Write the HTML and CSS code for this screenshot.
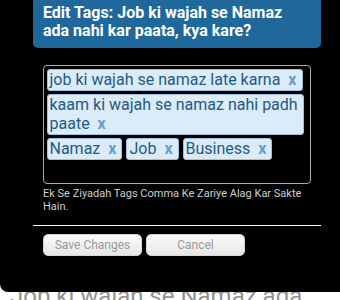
FILE: index.html
```html
<!DOCTYPE html>
<html>
<head>
<meta charset="utf-8">
<link rel="stylesheet" href="styles.css">
</head>
<body>
<div class="page">
  <h1 class="page-title">Job ki wajah se Namaz ada nahi kar paata, kya kare?</h1>
</div>
<div class="modal">
  <div class="modal-head">Edit Tags: Job ki wajah se Namaz ada nahi kar paata, kya kare?</div>
  <div class="tag-box">
    <span class="tag">job ki wajah se namaz late karna<span class="tag-x">x</span></span>
    <span class="tag">kaam ki wajah se namaz nahi padh paate<span class="tag-x">x</span></span>
    <span class="tag">Namaz<span class="tag-x">x</span></span>
    <span class="tag">Job<span class="tag-x">x</span></span>
    <span class="tag">Business<span class="tag-x">x</span></span>
  </div>
  <p class="hint">Ek Se Ziyadah Tags Comma Ke Zariye Alag Kar Sakte Hain.</p>
  <hr class="divider">
  <div class="actions">
    <button class="btn">Save Changes</button>
    <button class="btn">Cancel</button>
  </div>
</div>
</body>
</html>
```
FILE: styles.css
```css
html, body {
  margin: 0;
  padding: 0;
  background: #ffffff;
  font-family: Roboto, "Liberation Sans", sans-serif;
  overflow: hidden;
  height: 300px;
}

.page {
  padding: 282px 0 0 10px;
}

.page-title {
  margin: 0;
  width: 300px;
  font-size: 24px;
  font-weight: 400;
  line-height: 28px;
  color: #919191;
}

.modal {
  position: absolute;
  top: 0;
  left: 0;
  right: 0;
  height: 292px;
  background: #000000;
  border-bottom-left-radius: 8px;
  padding-left: 33px;
  box-sizing: border-box;
}

.modal-head {
  width: 288px;
  box-sizing: border-box;
  background: #1f689b;
  color: #ffffff;
  font-weight: 700;
  font-size: 16px;
  line-height: 18.5px;
  padding: 3.6px 10px 7.4px 10px;
  border-radius: 0 0 5px 5px;
}

.tag-box {
  margin: 17px 0 0 10px;
  width: 268px;
  height: 119px;
  box-sizing: border-box;
  border: 1px solid #a9a9a9;
  border-radius: 4px;
  padding: 3px 6px 2px 2.5px;
  display: flex;
  flex-wrap: wrap;
  align-content: flex-start;
  gap: 3px 4px;
}

.tag {
  display: inline-block;
  background: #dcebf8;
  border: 1px solid #9fc0dc;
  border-radius: 3px;
  color: #1d5b8b;
  font-size: 16px;
  line-height: 19px;
  padding: 0.5px 5px 0.5px 2px;
}

.tag-x {
  color: #5e9fd6;
  font-weight: 700;
  font-size: 16px;
  margin-left: 8px;
}

.hint {
  margin: 3px 0 0 10px;
  width: 268px;
  color: #cfcfcf;
  font-size: 11px;
  line-height: 13.5px;
}

.divider {
  margin: 11px 0 0 0;
  width: 288px;
  border: 0;
  height: 1px;
  background: #ffffff;
}

.actions {
  margin: 8px 0 0 10px;
  display: flex;
  gap: 4px;
}

.btn {
  width: 99px;
  height: 22px;
  box-sizing: border-box;
  border: 1px solid #d6d6d6;
  border-radius: 5px;
  background: linear-gradient(#fbfbfb, #e6e6e6);
  color: #9a9a9a;
  font-family: Roboto, "Liberation Sans", sans-serif;
  font-size: 12px;
  padding: 0;
}
```
